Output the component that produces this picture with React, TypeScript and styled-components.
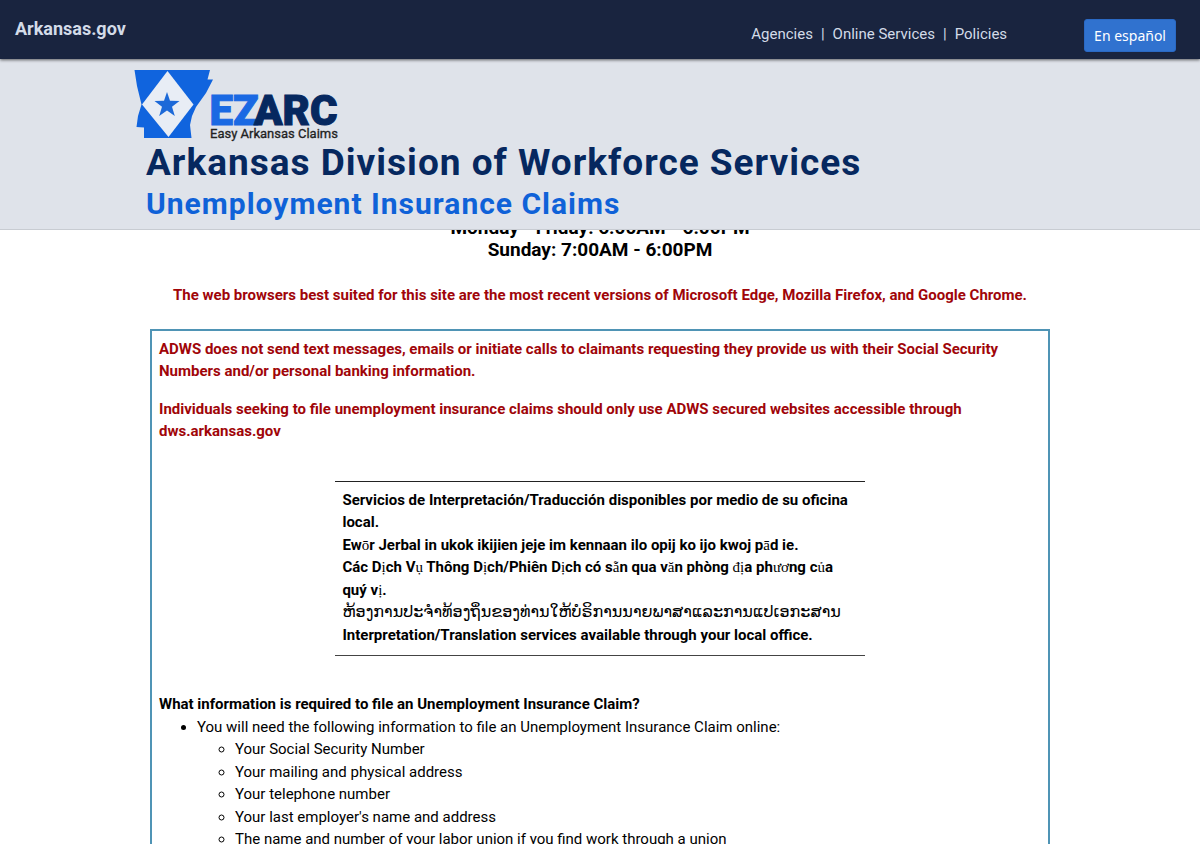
import React from "react";
import styled, { createGlobalStyle } from "styled-components";

const GlobalStyle = createGlobalStyle`
  *, *::before, *::after { box-sizing: border-box; }
  body {
    margin: 0;
    background: #fff;
    color: #000;
    font-family: Roboto, "Liberation Sans", sans-serif;
    font-size: 15px;
    line-height: 1.5;
  }
`;

const Page = styled.div`
  display: flex;
  flex-direction: column;
  height: 100vh;
  overflow: hidden;
`;

const TopBar = styled.div`
  display: flex;
  align-items: flex-start;
  min-height: 59px;
  padding: 0 24px 0 15px;
  background: #19243f;
  box-shadow: 0 1px 3px rgba(0, 0, 0, 0.6);
  position: relative;
`;

const StateLink = styled.a`
  margin-right: auto;
  padding-top: 15px;
  color: #d3dbe8;
  font-size: 18px;
  font-weight: 700;
  text-decoration: none;
`;

const TopNav = styled.nav`
  display: flex;
  gap: 8px;
  padding-top: 23px;
  margin-right: 77px;
  color: #d3dbe8;
`;

const TopLink = styled.a`
  color: inherit;
  text-decoration: none;
`;

const LanguageButton = styled.button`
  margin-top: 19px;
  height: 33px;
  padding: 0 9px;
  border: 1px solid #2a69c4;
  border-radius: 3px;
  background: #3072cf;
  color: #fff;
  font: 14px "Noto Sans", sans-serif;
`;

const Banner = styled.header`
  flex: none;
  background: #dfe3ea;
  border-bottom: 1px solid #c8ccd2;
`;

const BannerInner = styled.div`
  width: 100%;
  max-width: 932px;
  margin: 0 auto;
  padding: 9px 0 5px;
`;

const Logo = styled.svg`
  display: block;
  width: 206px;
  height: 74px;
  font-family: Roboto, sans-serif;
`;

const Title = styled.h1`
  margin: 0 0 0 12px;
  color: #06285f;
  font-size: 37px;
  line-height: 42px;
  font-weight: 700;
  letter-spacing: 1px;
`;

const Subtitle = styled.h2`
  margin: 0 0 0 12px;
  color: #0f62d8;
  font-size: 30px;
  line-height: 40px;
  font-weight: 700;
  letter-spacing: 1px;
`;

const Main = styled.main`
  flex: 1;
  min-height: 0;
  overflow: hidden;
`;

const Content = styled.div`
  width: 100%;
  max-width: 900px;
  margin: -13px auto 0;
`;

const Hours = styled.p`
  margin: 0 0 23px;
  font-size: 19px;
  line-height: 22px;
  font-weight: 700;
  text-align: center;
`;

const BrowserNote = styled.p`
  margin: 0 0 22px;
  color: #a00509;
  font-weight: 700;
  text-align: center;
`;

const InfoBox = styled.section`
  padding: 7px;
  border: 2px solid #4f94b5;
`;

const Warning = styled.p`
  margin: 0 0 15px;
  color: #a00509;
  font-weight: 700;
`;

const Languages = styled.div`
  width: 60%;
  margin: 38px auto 37px;
  padding: 7px 7px 9px;
  border-top: 1px solid #222;
  border-bottom: 1px solid #444;
  font-weight: 700;
`;

const LanguageLine = styled.p`
  margin: 0;
`;

const Accent = styled.span`
  font-family: "Liberation Serif", serif;
  font-weight: 400;
  line-height: 1;
`;

const Lao = styled.span`
  font-family: "DejaVu Sans", sans-serif;
  font-size: 16px;
  font-weight: 400;
  line-height: 1;
`;

const Question = styled.h3`
  margin: 0;
  font-size: 15px;
  font-weight: 700;
`;

const List = styled.ul`
  margin: 0;
  padding-left: 38px;
`;

const ACCENTED = /([ōāịụẵăđươủ]+)/;

function LocalText({ children }: { children: string }) {
  return (
    <LanguageLine>
      {children.split(ACCENTED).map((part, i) =>
        i % 2 ? <Accent key={i}>{part}</Accent> : part
      )}
    </LanguageLine>
  );
}

const required = [
  "Your Social Security Number",
  "Your mailing and physical address",
  "Your telephone number",
  "Your last employer's name and address",
  "The name and number of your labor union if you find work through a union",
];

export default function App() {
  return (
    <Page>
      <GlobalStyle />
      <TopBar>
        <StateLink href="#">Arkansas.gov</StateLink>
        <TopNav>
          <TopLink href="#">Agencies</TopLink>
          <span>|</span>
          <TopLink href="#">Online Services</TopLink>
          <span>|</span>
          <TopLink href="#">Policies</TopLink>
        </TopNav>
        <LanguageButton type="button">En español</LanguageButton>
      </TopBar>
      <Banner>
        <BannerInner>
          <Logo viewBox="0 0 206 74" role="img" aria-label="EZARC Easy Arkansas Claims">
            <path
              d="M.5 2H76L73.500 11.500H79L72 25L62 39L58 48L56 57L57.500 70H10V59.500L2.500 59L4 48L7.500 36.500L3 18Z"
              fill="#1064de"
            />
            <path d="M33.500 3L59.500 36.500L34.500 69L8 36.500Z" fill="#e8edf5" />
            <path
              d="M33 24L36 32.700L45.500 33L38 38.700L40.800 48L33 42.500L25.200 48L28 38.700L20.500 33L30 32.700Z"
              fill="#1c69d8"
            />
            <text x="75.500" y="57" fontSize="42" fontWeight="900" fill="#1a69e3" stroke="#1a69e3">EZ</text>
            <text x="120" y="57" fontSize="42" fontWeight="900" fill="#06285f" stroke="#06285f">ARC</text>
            <text x="76" y="70" fontSize="13" fill="#222" stroke="#222" strokeWidth=".3">Easy Arkansas Claims</text>
          </Logo>
          <Title>Arkansas Division of Workforce Services</Title>
          <Subtitle>Unemployment Insurance Claims</Subtitle>
        </BannerInner>
      </Banner>
      <Main>
        <Content>
          <Hours>
            Monday - Friday: 6:00AM - 6:00PM
            <br />
            Sunday: 7:00AM - 6:00PM
          </Hours>
          <BrowserNote>
            The web browsers best suited for this site are the most recent versions of Microsoft
            Edge, Mozilla Firefox, and Google Chrome.
          </BrowserNote>
          <InfoBox>
            <Warning>
              ADWS does not send text messages, emails or initiate calls to claimants requesting
              they provide us with their Social Security Numbers and/or personal banking
              information.
            </Warning>
            <Warning>
              Individuals seeking to file unemployment insurance claims should only use ADWS
              secured websites accessible through dws.arkansas.gov
            </Warning>
            <Languages>
              <LocalText>
                Servicios de Interpretación/Traducción disponibles por medio de su oficina local.
              </LocalText>
              <LocalText>
                Ewōr Jerbal in ukok ikijien jeje im kennaan ilo opij ko ijo kwoj pād ie.
              </LocalText>
              <LocalText>
                Các Dịch Vụ Thông Dịch/Phiên Dịch có sẵn qua văn phòng địa phương của quý vị.
              </LocalText>
              <LanguageLine>
                <Lao lang="lo">ຫ້ອງການປະຈຳທ້ອງຖິ່ນຂອງທ່ານໃຫ້ບໍຣິການນາຍພາສາແລະການແປເອກະສານ</Lao>
              </LanguageLine>
              <LanguageLine>
                Interpretation/Translation services available through your local office.
              </LanguageLine>
            </Languages>
            <Question>What information is required to file an Unemployment Insurance Claim?</Question>
            <List>
              <li>
                You will need the following information to file an Unemployment Insurance Claim
                online:
                <List>
                  {required.map((item) => (
                    <li key={item}>{item}</li>
                  ))}
                </List>
              </li>
            </List>
          </InfoBox>
        </Content>
      </Main>
    </Page>
  );
}
